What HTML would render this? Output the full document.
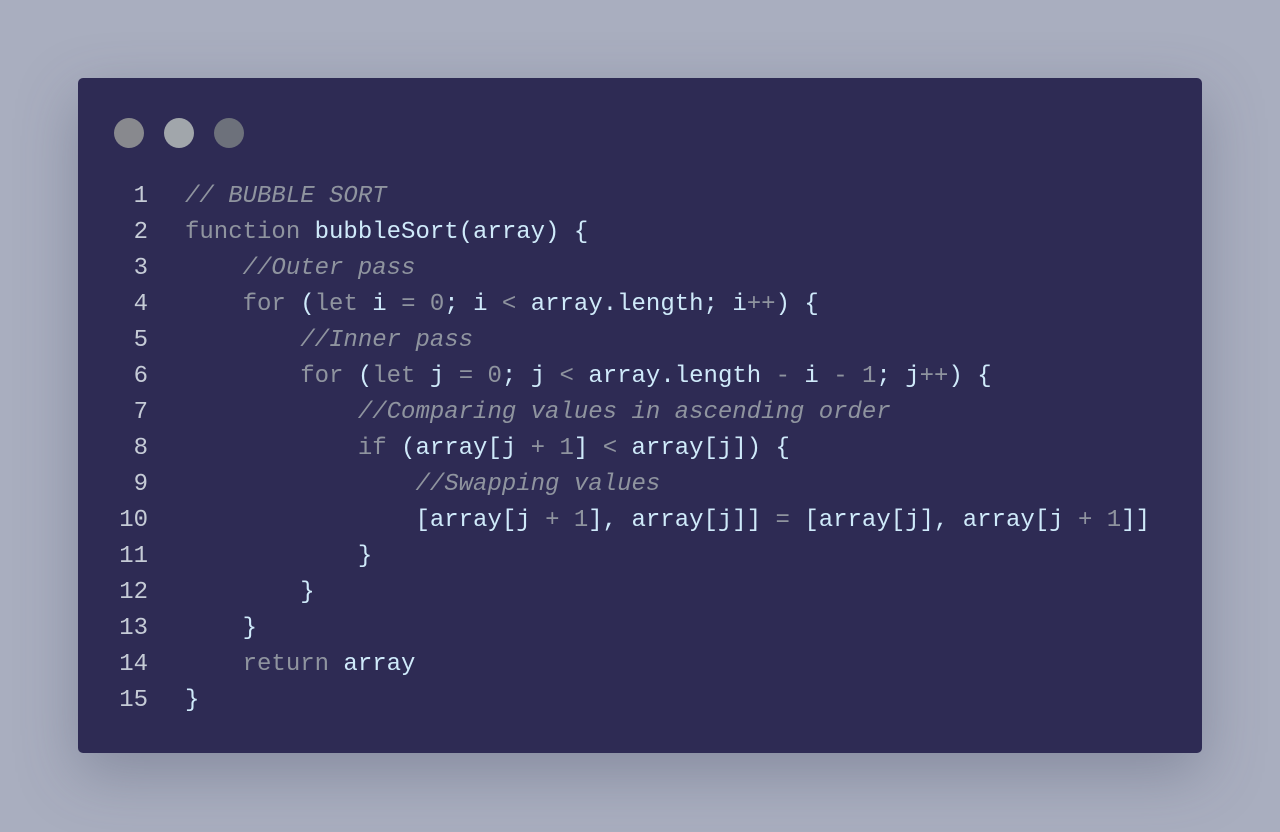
<!DOCTYPE html>
<html><head><meta charset="utf-8"><style>
html,body{margin:0;padding:0;width:1280px;height:832px;overflow:hidden;background:#a9aebf;}
.card{position:absolute;left:78px;top:78px;width:1124px;height:675px;background:#2e2b54;border-radius:5px;box-shadow:0 20px 60px rgba(70,75,100,0.35);}
.dot{position:absolute;top:40px;width:30px;height:30px;border-radius:50%;}
pre{position:absolute;margin:0;left:38px;top:101px;font-family:"Liberation Mono",monospace;font-size:24px;line-height:36px;color:#cfeafa;}
.n{display:inline-block;width:32px;text-align:right;color:#c5cbd6;margin-right:37px;}
.c{color:#8f949f;font-style:italic;}
.k{color:#8f949f;}
</style></head><body>
<div class="card">
<div class="dot" style="left:36px;background:#88898e"></div>
<div class="dot" style="left:86px;background:#a1a6ab"></div>
<div class="dot" style="left:136px;background:#6d717b"></div>
<pre><span class="n">1</span><span class="c">// BUBBLE SORT</span>
<span class="n">2</span><span class="k">function</span> bubbleSort(array) {
<span class="n">3</span>    <span class="c">//Outer pass</span>
<span class="n">4</span>    <span class="k">for</span> (<span class="k">let</span> i <span class="k">=</span> <span class="k">0</span>; i <span class="k">&lt;</span> array.length; i<span class="k">++</span>) {
<span class="n">5</span>        <span class="c">//Inner pass</span>
<span class="n">6</span>        <span class="k">for</span> (<span class="k">let</span> j <span class="k">=</span> <span class="k">0</span>; j <span class="k">&lt;</span> array.length <span class="k">-</span> i <span class="k">-</span> <span class="k">1</span>; j<span class="k">++</span>) {
<span class="n">7</span>            <span class="c">//Comparing values in ascending order</span>
<span class="n">8</span>            <span class="k">if</span> (array[j <span class="k">+</span> <span class="k">1</span>] <span class="k">&lt;</span> array[j]) {
<span class="n">9</span>                <span class="c">//Swapping values</span>
<span class="n">10</span>                [array[j <span class="k">+</span> <span class="k">1</span>], array[j]] <span class="k">=</span> [array[j], array[j <span class="k">+</span> <span class="k">1</span>]]
<span class="n">11</span>            }
<span class="n">12</span>        }
<span class="n">13</span>    }
<span class="n">14</span>    <span class="k">return</span> array
<span class="n">15</span>}</pre>
</div>
</body></html>
